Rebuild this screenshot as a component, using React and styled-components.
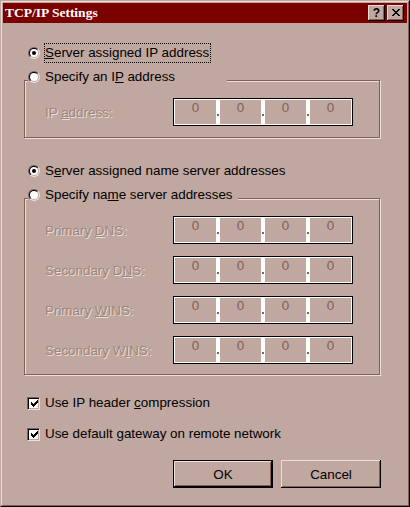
import React from "react";
import styled, { createGlobalStyle } from "styled-components";

const face = "#c0a8a0";
const shadow = "#806058";
const light = "#ecdfda";
const titleRed = "#7b0000";
const grayText = "#9a8680";

const GlobalStyle = createGlobalStyle`
  html, body { margin: 0; padding: 0; }
  body { background: ${face}; font-family: "Liberation Sans", Arial, sans-serif; }
  * { box-sizing: border-box; }
`;

const Window = styled.div`
  width: 410px;
  height: 507px;
  background: ${face};
  border: 1px solid;
  border-color: ${face} #000 #000 ${face};
`;

const Frame = styled.div`
  height: 100%;
  border: 1px solid;
  border-color: ${light} ${shadow} ${shadow} ${light};
  padding: 1px;
  display: flex;
  flex-direction: column;
`;

const TitleBar = styled.div`
  height: 20px;
  background: ${titleRed};
  display: flex;
  align-items: center;
  padding: 0 3px 0 2px;
  color: #fff;
  font-family: "Liberation Serif", "Times New Roman", serif;
  font-weight: bold;
  font-size: 13.5px;
`;

const TitleText = styled.div`
  flex: 1;
  line-height: 20px;
`;

const CaptionButtons = styled.div`
  display: flex;
  gap: 2px;
`;

const CaptionButton = styled.div`
  width: 17px;
  height: 16px;
  background: ${face};
  box-shadow: inset -1px -1px 0 #000, inset 1px 1px 0 ${light},
    inset -2px -2px 0 ${shadow};
  display: flex;
  align-items: center;
  justify-content: center;
  color: #000;
  font-family: "Liberation Sans", Arial, sans-serif;
  font-weight: bold;
  font-size: 12px;
  line-height: 1;
  padding-bottom: 1px;
`;

const Body = styled.div`
  flex: 1;
  display: flex;
  flex-direction: column;
  padding: 0 26px 0 21px;
  font-size: 13.4px;
  color: #000;
`;

const OptionRow = styled.div`
  display: flex;
  align-items: center;
  height: 20px;
  margin-top: ${(p) => p.$mt || 0}px;
  padding-left: ${(p) => p.$pl || 0}px;
`;

const RadioOuter = styled.span`
  flex: none;
  width: 12px;
  height: 12px;
  border-radius: 50%;
  padding: 1px;
  display: flex;
  background: linear-gradient(135deg, ${shadow} 50%, ${light} 50%);
`;

const RadioInner = styled.span`
  flex: 1;
  border-radius: 50%;
  padding: 1px;
  display: flex;
  background: linear-gradient(135deg, #000 50%, ${face} 50%);
`;

const RadioWell = styled.span`
  flex: 1;
  border-radius: 50%;
  background: #fff;
  display: flex;
  align-items: center;
  justify-content: center;
`;

const RadioDot = styled.span`
  width: 4px;
  height: 4px;
  border-radius: 50%;
  background: #000;
`;

const CheckBox = styled.span`
  flex: none;
  width: 13px;
  height: 13px;
  border: 1px solid;
  border-color: ${shadow} ${light} ${light} ${shadow};
  box-shadow: inset 1px 1px 0 #000, inset -1px -1px 0 ${face};
  background: #fff;
  display: flex;
  align-items: center;
  justify-content: center;
  padding: 1px 0 0 1px;
`;

const OptionLabel = styled.span`
  margin-left: 4px;
  border: 1px ${(p) => (p.$focus ? "dotted #000" : "solid transparent")};
  padding-right: 1px;
  line-height: 18px;
  white-space: nowrap;
`;

const Key = styled.span`
  text-decoration: underline;
  text-underline-offset: 1px;
`;

const Group = styled.fieldset`
  width: 356px;
  margin: ${(p) => p.$mt}px 0 0 0;
  padding: 4px 0 ${(p) => p.$pb}px 0;
  min-width: 0;
  border: 1px solid ${shadow};
  box-shadow: inset 1px 1px 0 ${light}, 1px 1px 0 ${light};
`;

const Legend = styled.legend`
  width: ${(p) => p.$w}px;
  margin-left: 3px;
  padding: 0 0 7px 0;
  background: ${face};
`;

const FieldList = styled.div`
  display: flex;
  flex-direction: column;
  gap: 12px;
  padding-left: 20px;
`;

const FieldRow = styled.div`
  display: grid;
  grid-template-columns: 128px 180px;
  align-items: center;
  height: 28px;
`;

const DisabledLabel = styled.span`
  color: ${grayText};
  text-shadow: 1px 1px 0 ${light};
  white-space: nowrap;
`;

const IPBox = styled.div`
  width: 180px;
  height: 28px;
  border: 1px solid #000;
  padding: 1px;
  background: #fff;
  display: flex;
`;

const Octet = styled.div`
  width: 41px;
  background: ${face};
  color: ${shadow};
  text-align: center;
  line-height: 16px;
`;

const Separator = styled.div`
  width: 4px;
  padding: 14px 0 0 1px;
`;

const SepDot = styled.div`
  width: 2px;
  height: 2px;
  background: ${shadow};
`;

const ButtonRow = styled.div`
  display: flex;
  justify-content: flex-end;
  gap: 8px;
  margin-top: 16px;
`;

const Button = styled.button`
  width: 100px;
  height: 28px;
  background: ${face};
  border: ${(p) => (p.$default ? "1px solid #000" : "none")};
  box-shadow: inset -1px -1px 0 #000, inset 1px 1px 0 ${light},
    inset -2px -2px 0 ${shadow};
  font-family: "Liberation Sans", Arial, sans-serif;
  font-size: 13.4px;
  color: #000;
  padding: 0;
`;

const Radio = ({ checked }) => (
  <RadioOuter>
    <RadioInner>
      <RadioWell>{checked && <RadioDot />}</RadioWell>
    </RadioInner>
  </RadioOuter>
);

const Check = () => (
  <CheckBox>
    <svg width="7" height="7" viewBox="0 0 7 7" shapeRendering="crispEdges">
      <path
        fill="#000"
        d="M0 2h1v3H0z M1 3h1v3H1z M2 4h1v3H2z M3 3h1v3H3z M4 2h1v3H4z M5 1h1v3H5z M6 0h1v3H6z"
      />
    </svg>
  </CheckBox>
);

const IPField = () => (
  <IPBox>
    <Octet>0</Octet>
    <Separator><SepDot /></Separator>
    <Octet>0</Octet>
    <Separator><SepDot /></Separator>
    <Octet>0</Octet>
    <Separator><SepDot /></Separator>
    <Octet>0</Octet>
  </IPBox>
);

const CloseIcon = () => (
  <svg width="8" height="7" viewBox="0 0 8 7" shapeRendering="crispEdges">
    <path
      fill="#000"
      d="M0 0h2v1H0z M6 0h2v1H6z M1 1h2v1H1z M5 1h2v1H5z M2 2h4v1H2z M3 3h2v1H3z M2 4h4v1H2z M1 5h2v1H1z M5 5h2v1H5z M0 6h2v1H0z M6 6h2v1H6z"
    />
  </svg>
);

const dnsFields = [
  ["Primary ", "D", "NS:"],
  ["Secondary D", "N", "S:"],
  ["Primary ", "W", "INS:"],
  ["Secondary W", "I", "NS:"],
];

export default function App() {
  return (
    <>
      <GlobalStyle />
      <Window>
        <Frame>
          <TitleBar>
            <TitleText>TCP/IP Settings</TitleText>
            <CaptionButtons>
              <CaptionButton>?</CaptionButton>
              <CaptionButton>
                <CloseIcon />
              </CaptionButton>
            </CaptionButtons>
          </TitleBar>
          <Body>
            <OptionRow $mt={20} $pl={4}>
              <Radio checked />
              <OptionLabel $focus>
                <Key>S</Key>erver assigned IP address
              </OptionLabel>
            </OptionRow>
            <Group $mt={4} $pb={11}>
              <Legend $w={199}>
                <OptionRow>
                  <Radio />
                  <OptionLabel>
                    Specify an I<Key>P</Key> address
                  </OptionLabel>
                </OptionRow>
              </Legend>
              <FieldList>
                <FieldRow>
                  <DisabledLabel>
                    IP <Key>a</Key>ddress:
                  </DisabledLabel>
                  <IPField />
                </FieldRow>
              </FieldList>
            </Group>
            <OptionRow $mt={23} $pl={4}>
              <Radio checked />
              <OptionLabel>
                S<Key>e</Key>rver assigned name server addresses
              </OptionLabel>
            </OptionRow>
            <Group $mt={4} $pb={10}>
              <Legend $w={210}>
                <OptionRow>
                  <Radio />
                  <OptionLabel>
                    Specify na<Key>m</Key>e server addresses
                  </OptionLabel>
                </OptionRow>
              </Legend>
              <FieldList>
                {dnsFields.map(([a, k, b]) => (
                  <FieldRow key={a + k + b}>
                    <DisabledLabel>
                      {a}
                      <Key>{k}</Key>
                      {b}
                    </DisabledLabel>
                    <IPField />
                  </FieldRow>
                ))}
              </FieldList>
            </Group>
            <OptionRow $mt={18} $pl={3}>
              <Check />
              <OptionLabel>
                Use IP header <Key>c</Key>ompression
              </OptionLabel>
            </OptionRow>
            <OptionRow $mt={11} $pl={3}>
              <Check />
              <OptionLabel>
                Use default <Key>g</Key>ateway on remote network
              </OptionLabel>
            </OptionRow>
            <ButtonRow>
              <Button $default>OK</Button>
              <Button>Cancel</Button>
            </ButtonRow>
          </Body>
        </Frame>
      </Window>
    </>
  );
}
